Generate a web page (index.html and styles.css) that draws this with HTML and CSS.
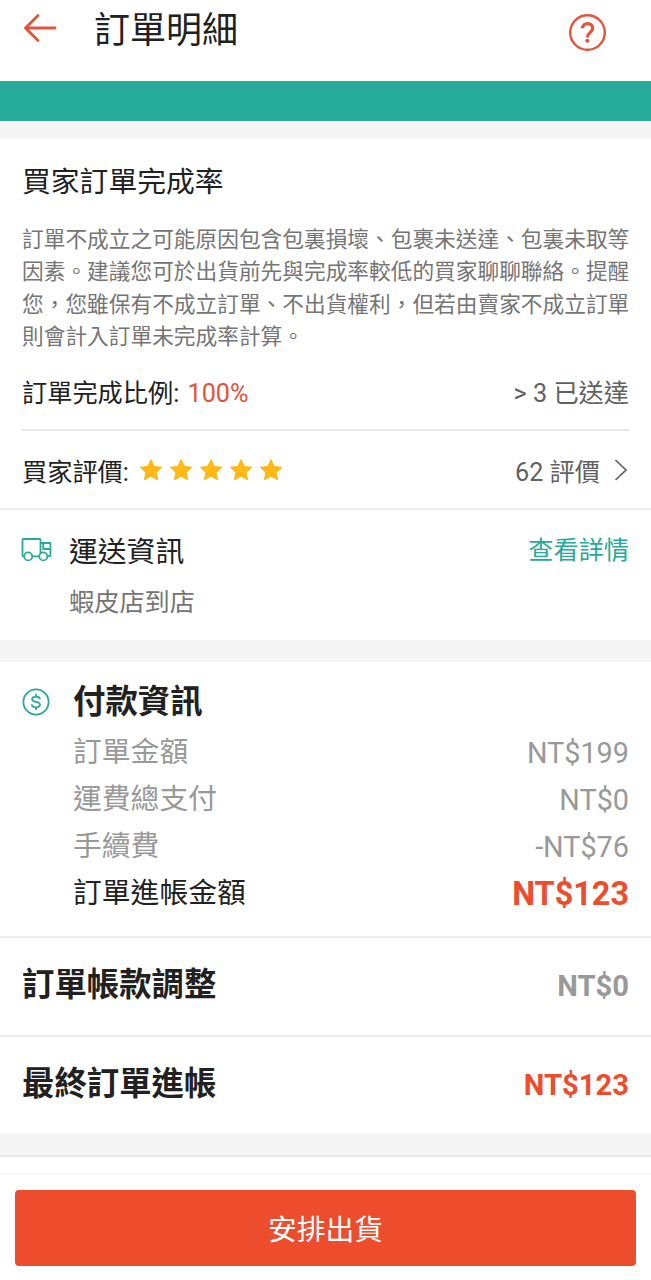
FILE: index.html
```
<!DOCTYPE html>
<html lang="zh-Hant">
    <head>
        <meta charset="UTF-8">
        <meta name="viewport" content="width=device-width, initial-scale=1.0">
        <title>訂單明細</title>
        <link rel="stylesheet" href="styles.css">
    </head>
    <body>
        <header class="header">
            <svg class="back-icon" viewBox="0 0 34 30" fill="none" stroke="currentColor" stroke-width="2.8" stroke-linecap="round" stroke-linejoin="round">
                <path d="M15 2.5 2.5 15 15 27.5M2.5 15H32"/>
            </svg>
            <h1>訂單明細</h1>
            <svg class="help-icon" viewBox="0 0 38 38" fill="none" stroke="currentColor">
                <circle cx="18.5" cy="19.5" r="17.3" stroke-width="2.4"/>
                <path d="M13.5 15.2C13.5 12.4 15.6 10.7 18.6 10.7C21.7 10.7 23.7 12.5 23.7 15.2C23.7 19.2 18.3 19.8 18.3 24.6" stroke-width="3.2"/>
                <circle cx="18.3" cy="27.8" r="2" fill="currentColor" stroke="none"/>
            </svg>
        </header>
        <div class="banner"></div>

        <section class="buyer">
            <h2>買家訂單完成率</h2>
            <p class="description">訂單不成立之可能原因包含包裏損壞、包裹未送達、包裏未取等<br>因素。建議您可於出貨前先與完成率較低的買家聊聊聯絡。提醒<br>您，您雖保有不成立訂單、不出貨權利，但若由賣家不成立訂單<br>則會計入訂單未完成率計算。</p>
            <div class="buyer-row rate">
                <div>訂單完成比例: <span class="percent">100%</span></div>
                <div class="value">&gt; 3 已送達</div>
            </div>
            <div class="buyer-row">
                <div class="rating">
                    買家評價:
                    <div class="stars">
                        <svg viewBox="0 0 24 24"><use href="#star"/></svg>
                        <svg viewBox="0 0 24 24"><use href="#star"/></svg>
                        <svg viewBox="0 0 24 24"><use href="#star"/></svg>
                        <svg viewBox="0 0 24 24"><use href="#star"/></svg>
                        <svg viewBox="0 0 24 24"><use href="#star"/></svg>
                    </div>
                </div>
                <div class="value">
                    62 評價
                    <svg class="chevron" viewBox="0 0 14 24" fill="none" stroke="currentColor" stroke-width="1.7">
                        <path d="M1.5 2 12 12 1.5 22"/>
                    </svg>
                </div>
            </div>
        </section>

        <section class="shipping">
            <svg class="truck-icon" viewBox="0 0 32 26" fill="none" stroke="currentColor" stroke-width="1.8" stroke-linejoin="round">
                <path d="M3.3 19.2H2.5Q1.5 19.2 1.5 18.2V3Q1.5 2 2.5 2H18.5Q19.5 2 19.5 3V16.6M11.2 19.4H18.2M19.5 6H29.4V18.2Q29.4 19.2 28.4 19.2H26.3M22.2 6V12H29.4"/>
                <circle cx="7.2" cy="19.4" r="4"/>
                <circle cx="22.3" cy="19.4" r="4"/>
            </svg>
            <div class="shipping-info">
                <h2>運送資訊</h2>
                <p>蝦皮店到店</p>
            </div>
            <a class="detail-link">查看詳情</a>
        </section>

        <section class="payment">
            <svg class="coin-icon" viewBox="0 0 28 28" fill="none" stroke="currentColor" stroke-width="1.8">
                <circle cx="14" cy="14" r="12.6"/>
                <path d="M18 11.2C17.8 9.5 16.2 8.6 14 8.6C11.7 8.6 10.1 9.6 10.1 11.2C10.1 14.9 18 12.8 18 16.6C18 18.3 16.3 19.3 14 19.3C11.6 19.3 9.9 18.3 9.7 16.4M14 5.8V8.6M14 19.3V22.1"/>
            </svg>
            <div class="payment-info">
                <h2>付款資訊</h2>
                <div class="payment-row"><span>訂單金額</span><span>NT$199</span></div>
                <div class="payment-row"><span>運費總支付</span><span>NT$0</span></div>
                <div class="payment-row"><span>手續費</span><span>-NT$76</span></div>
                <div class="payment-row income"><span>訂單進帳金額</span><span class="amount">NT$123</span></div>
            </div>
        </section>

        <div class="summary-row">
            <h2>訂單帳款調整</h2>
            <span class="amount muted">NT$0</span>
        </div>
        <div class="summary-row last">
            <h2>最終訂單進帳</h2>
            <span class="amount">NT$123</span>
        </div>

        <div class="next-section"></div>
        <footer class="footer">
            <button class="ship-button">安排出貨</button>
        </footer>

        <svg class="symbols">
            <symbol id="star" viewBox="0 0 24 24">
                <path d="M12 1.6 15.2 8.4 22.7 9.3 17.2 14.4 18.6 21.8 12 18.2 5.4 21.8 6.8 14.4 1.3 9.3 8.8 8.4Z" fill="#ffb916" stroke="#ffb916" stroke-linejoin="round"/>
            </symbol>
        </svg>
    </body>
</html>
```
FILE: styles.css
```
* {
    margin: 0;
    padding: 0;
    box-sizing: border-box;
}

body {
    background-color: #fff;
    color: #212121;
    font-family: Roboto, "Noto Sans CJK TC", sans-serif;
    min-height: 100vh;
    overflow-x: hidden;
}

svg {
    display: block;
    flex-shrink: 0;
}

h1,
h2 {
    font-weight: normal;
    white-space: nowrap;
}

.header {
    display: flex;
    align-items: flex-start;
    height: 81px;
    padding: 0 44px 0 23px;
    color: #e5533a;
}

.back-icon {
    width: 34px;
    height: 30px;
    margin-top: 13px;
}

.header h1 {
    flex: 1;
    margin-left: 37px;
    color: #212121;
    font-size: 36px;
    line-height: 62px;
}

.help-icon {
    width: 38px;
    height: 38px;
    margin-top: 13px;
}

.banner {
    height: 58px;
    background-color: #26aa99;
    border-bottom: 18px solid #f5f5f5;
}

.buyer {
    padding: 23px 22px 0;
    border-bottom: 2px solid #eee;
}

.buyer h2 {
    font-size: 28.8px;
    line-height: 40px;
}

.description {
    margin-top: 22px;
    color: #757575;
    font-size: 21.7px;
    line-height: 32.4px;
    white-space: nowrap;
}

.buyer-row {
    display: flex;
    justify-content: space-between;
    align-items: center;
    height: 77px;
    padding-top: 1px;
    font-size: 25.2px;
}

.buyer-row.rate {
    padding: 0 0 1px;
    border-bottom: 2px solid #e8e8e8;
}

.percent {
    margin-left: 2px;
    color: #e5533a;
}

.value {
    display: flex;
    align-items: center;
    color: #616161;
}

.rating {
    display: flex;
    align-items: center;
}

.stars {
    display: flex;
    gap: 6px;
    margin: 1px 0 0 10px;
}

.stars svg {
    width: 24px;
    height: 24px;
}

.chevron {
    width: 14px;
    height: 24px;
    margin: 0 1px 0 14px;
}

.shipping {
    display: flex;
    align-items: flex-start;
    height: 152px;
    padding: 0 22px 0 21px;
    border-bottom: 22px solid #f5f5f5;
}

.truck-icon {
    width: 32px;
    height: 26px;
    margin-top: 27px;
    color: #26aa99;
}

.shipping-info {
    flex: 1;
    margin: 22px 0 0 16px;
}

.shipping h2 {
    font-size: 28.8px;
    line-height: 40px;
}

.shipping p {
    margin-top: 13px;
    color: #757575;
    font-size: 25.2px;
    line-height: 36px;
}

.detail-link {
    margin-top: 21px;
    color: #26aa99;
    font-size: 25.2px;
    line-height: 40px;
}

.payment {
    display: flex;
    align-items: flex-start;
    height: 276px;
    padding: 0 22px;
    border-bottom: 2px solid #eee;
}

.coin-icon {
    width: 28px;
    height: 28px;
    margin-top: 26px;
    color: #26aa99;
}

.payment-info {
    flex: 1;
    margin: 15px 0 0 23px;
}

.payment h2 {
    margin-bottom: 2px;
    font-size: 32.4px;
    font-weight: bold;
    line-height: 50px;
}

.payment-row {
    display: flex;
    justify-content: space-between;
    color: #999;
    font-size: 28.8px;
    line-height: 47px;
}

.payment-row span:last-child {
    padding-top: 1px;
    line-height: 46px;
}

.payment-row.income {
    color: #212121;
}

.amount {
    color: #ee4d2d;
    font-size: 29.2px;
    font-weight: bold;
}

.payment-row.income .amount {
    padding-top: 2px;
    font-size: 32.4px;
    line-height: 45px;
}

.summary-row {
    display: flex;
    justify-content: space-between;
    align-items: center;
    height: 99px;
    padding: 0 22px;
    border-bottom: 2px solid #eee;
}

.summary-row h2 {
    padding-bottom: 2px;
    font-size: 32.4px;
    font-weight: bold;
    line-height: 44px;
}

.summary-row.last {
    height: 96px;
    border-bottom: none;
}

.muted {
    color: #999;
}

.next-section {
    height: 40px;
    border-top: 22px solid #f5f5f5;
    box-shadow: inset 0 2px #e8e8e8;
}

.footer {
    height: 107px;
    padding: 15px 15px 0;
    border-top: 2px solid #fafafa;
}

.ship-button {
    display: block;
    width: 100%;
    height: 76px;
    border: none;
    border-radius: 4px;
    background-color: #ee4d2d;
    color: #fff;
    font-family: inherit;
    font-size: 28.8px;
}

.symbols {
    position: absolute;
    width: 0;
    height: 0;
}
```
